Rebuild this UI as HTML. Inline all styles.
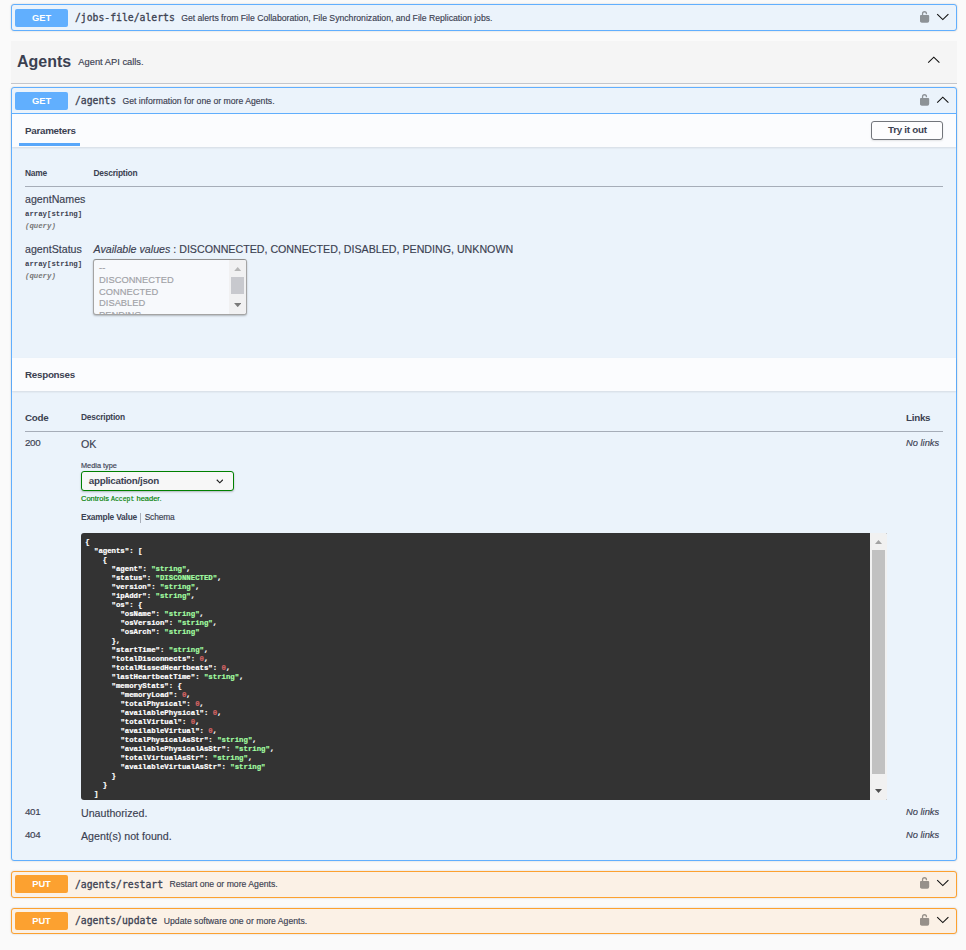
<!DOCTYPE html>
<html lang="en">
<head>
<meta charset="utf-8">
<title>Swagger UI - Agents</title>
<style>
html,body{margin:0;padding:0}
body{width:966px;height:950px;position:relative;overflow:hidden;background:#fafafa;color:#3b4151;
 font-family:"Liberation Sans", Arial, sans-serif}
section{display:contents}
section>div,section>span,section>svg{position:absolute;box-sizing:border-box}
.t{line-height:1;white-space:pre;color:#3b4151}
.t>.z{display:inline-block;width:0;height:14px}
.t:not(.b){-webkit-text-stroke:0.15px currentColor}
.m{font-family:"Liberation Mono", "DejaVu Sans Mono", monospace}
.b{font-weight:bold}
.i{font-style:italic}
.w{color:#fff}
.c{transform:translateX(-50%)}
.op{border:1px solid #61affe;border-radius:3px;background:#ebf3fb;box-shadow:0 0 2px rgba(0,0,0,.19)}
.op.put{border-color:#fca130;background:#fbf1e6}
.badge{border-radius:2px;background:#61affe}
.badge.put{background:#fca130}
.sec{background:#fbfcfe;box-shadow:0 1px 2px rgba(0,0,0,.1)}
.hr{background:#a6adb8}
.t.path{font-family:"DejaVu Sans Mono","Liberation Mono",monospace;-webkit-text-stroke:0.3px #3b4151}
.gray{color:#777}
.o{position:absolute;left:5.1px;font-size:9.33px;color:#a0a1a6}
.green{color:#008000}
pre{margin:0}
</style>
</head>
<body>

<section class="opblock opblock-get" aria-label="GET /jobs-file/alerts">
<div class="op get" style="left:11px;top:4px;width:946px;height:27px;"></div>
<div class="badge get" style="left:15px;top:9px;width:53px;height:18px;"></div>
<span class="t b w c" style="left:41.5px;top:7px;font-size:9.33px;"><i class="z"></i>GET</span>
<span class="t m path" style="left:75px;top:7px;font-size:9.75px;"><i class="z"></i>/jobs-file/alerts</span>
<span class="t" style="left:181.2px;top:7px;font-size:8.67px;"><i class="z"></i>Get alerts from File Collaboration, File Synchronization, and File Replication jobs.</span>
<svg class="ic" style="left:920px;top:11px" width="10" height="12" viewBox="0 0 20 24"><path d="M5.1 8.2V5.4C5.1 3 6.8 1.5 9 1.5C11.2 1.5 12.9 3 12.9 5.4V6.4" fill="none" stroke="#000" stroke-opacity=".4" stroke-width="2.6"/><path d="M1.8 8.2H16.4a2 2 0 0 1 2 2V19.7a3.8 3.8 0 0 1 -3.8 3.8H3.6a3.8 3.8 0 0 1 -3.8 -3.8V10.2a2 2 0 0 1 2 -2z" fill="#000" fill-opacity=".4"/></svg>
<svg class="ic" style="left:936px;top:13.2px" width="14" height="8" viewBox="0 0 14 8"><path d="M1.2 1.1 L6.8 6.6 L12.4 1.1" fill="none" stroke="#111" stroke-width="1.1"/></svg>
</section>
<section class="opblock-tag" aria-label="Agents">
<div style="left:11px;top:41px;width:946px;height:43px;background:#f5f5f5;border-bottom:1px solid #c4c6cb"></div>
<span class="t b" style="left:17px;top:53px;font-size:16px;"><i class="z"></i>Agents</span>
<span class="t" style="left:78.3px;top:51px;font-size:9.33px;"><i class="z"></i>Agent API calls.</span>
<svg class="ic" style="left:927px;top:56px" width="14" height="8" viewBox="0 0 14 8"><path d="M1.2 6.6 L6.8 1.2 L12.4 6.6" fill="none" stroke="#111" stroke-width="1.1"/></svg>
</section>
<section class="opblock opblock-get is-open" aria-label="GET /agents">
<div class="op get" style="left:11px;top:87px;width:946px;height:774px;"></div>
<div style="left:12px;top:113px;width:944px;height:1px;background:#61affe"></div>
<div class="badge get" style="left:15px;top:92px;width:53px;height:18px;"></div>
<span class="t b w c" style="left:41.5px;top:90px;font-size:9.33px;"><i class="z"></i>GET</span>
<span class="t m path" style="left:75px;top:90px;font-size:9.75px;"><i class="z"></i>/agents</span>
<span class="t" style="left:122.5px;top:90px;font-size:8.67px;"><i class="z"></i>Get information for one or more Agents.</span>
<svg class="ic" style="left:920px;top:94px" width="10" height="12" viewBox="0 0 20 24"><path d="M5.1 8.2V5.4C5.1 3 6.8 1.5 9 1.5C11.2 1.5 12.9 3 12.9 5.4V6.4" fill="none" stroke="#000" stroke-opacity=".4" stroke-width="2.6"/><path d="M1.8 8.2H16.4a2 2 0 0 1 2 2V19.7a3.8 3.8 0 0 1 -3.8 3.8H3.6a3.8 3.8 0 0 1 -3.8 -3.8V10.2a2 2 0 0 1 2 -2z" fill="#000" fill-opacity=".4"/></svg>
<svg class="ic" style="left:936px;top:96px" width="14" height="8" viewBox="0 0 14 8"><path d="M1.2 6.6 L6.8 1.2 L12.4 6.6" fill="none" stroke="#111" stroke-width="1.1"/></svg>
<section class="parameters" aria-label="Parameters">
<div class="sec" style="left:12px;top:114px;width:944px;height:33px;"></div>
<span class="t b" style="left:25px;top:120px;font-size:9.8px;letter-spacing:-0.27px"><i class="z"></i>Parameters</span>
<div style="left:19.3px;top:143px;width:60.9px;height:3px;background:#58a7fa"></div>
<div style="left:871px;top:121px;width:72px;height:19px;border:1.33px solid #72757b;border-radius:3px;background:#fdfdfe;box-shadow:0 1px 2px rgba(0,0,0,.1)"></div>
<span class="t b c" style="left:907.3px;top:119px;font-size:9.8px;letter-spacing:-0.27px"><i class="z"></i>Try it out</span>
<span class="t b" style="left:25px;top:162px;font-size:8.4px;letter-spacing:-0.2px"><i class="z"></i>Name</span>
<span class="t b" style="left:93.5px;top:162px;font-size:8.4px;letter-spacing:-0.2px"><i class="z"></i>Description</span>
<div class="hr" style="left:25px;top:186px;width:918px;height:1px;"></div>
<span class="t" style="left:25px;top:189px;font-size:10.67px;"><i class="z"></i>agentNames</span>
<span class="t m b" style="left:25px;top:202px;font-size:7.33px;"><i class="z"></i>array[string]</span>
<span class="t m b i gray" style="left:25px;top:214px;font-size:7.33px;"><i class="z"></i>(query)</span>
<span class="t" style="left:25px;top:239px;font-size:10.67px;"><i class="z"></i>agentStatus</span>
<span class="t m b" style="left:25px;top:252px;font-size:7.33px;"><i class="z"></i>array[string]</span>
<span class="t m b i gray" style="left:25px;top:264px;font-size:7.33px;"><i class="z"></i>(query)</span>
<span class="t" style="left:93.5px;top:239px;font-size:10.67px;"><i class="z"></i><em>Available values</em> : DISCONNECTED, CONNECTED, DISABLED, PENDING, UNKNOWN</span>
<div style="left:93px;top:259px;width:154px;height:56px;border:1px solid #a4a4a4;border-top-color:#8f8f8f;border-radius:3px;background:#f7f9fc;box-shadow:0 1px 2px rgba(0,0,0,.25);overflow:hidden"><span class="t o" style="top:-3px"><i class="z"></i>--</span><span class="t o" style="top:9px"><i class="z"></i>DISCONNECTED</span><span class="t o" style="top:21px"><i class="z"></i>CONNECTED</span><span class="t o" style="top:32px"><i class="z"></i>DISABLED</span><span class="t o" style="top:44px"><i class="z"></i>PENDING</span><div style="position:absolute;right:0;top:0;width:17px;height:54px;background:#f1f1f2"></div><div style="position:absolute;right:2px;top:17px;width:13px;height:16.8px;background:#c8c9ce"></div><svg style="position:absolute;right:4.9px;top:6.8px" width="7.4" height="4.2" viewBox="0 0 7 4"><path d="M0 4L3.5 0L7 4z" fill="#b6b6b6"/></svg><svg style="position:absolute;right:4.9px;top:42.8px" width="7.4" height="4.2" viewBox="0 0 7 4"><path d="M0 0L3.5 4L7 0z" fill="#7a7a7a"/></svg></div>
</section>
<section class="responses" aria-label="Responses">
<div class="sec" style="left:12px;top:358px;width:944px;height:33px;"></div>
<span class="t b" style="left:25px;top:364px;font-size:9.8px;letter-spacing:-0.27px"><i class="z"></i>Responses</span>
<span class="t b" style="left:25px;top:407px;font-size:9.8px;letter-spacing:-0.27px"><i class="z"></i>Code</span>
<span class="t b" style="left:81px;top:406px;font-size:8.4px;letter-spacing:-0.2px"><i class="z"></i>Description</span>
<span class="t b" style="left:906px;top:407px;font-size:9.8px;letter-spacing:-0.27px"><i class="z"></i>Links</span>
<div class="hr" style="left:25px;top:431px;width:918px;height:1px;"></div>
<span class="t" style="left:25px;top:432px;font-size:9.8px;letter-spacing:-0.35px"><i class="z"></i>200</span>
<span class="t" style="left:81px;top:434px;font-size:10.67px;"><i class="z"></i>OK</span>
<span class="t i" style="left:906px;top:432px;font-size:9.33px;"><i class="z"></i>No links</span>
<span class="t" style="left:81px;top:454px;font-size:7.33px;"><i class="z"></i>Media type</span>
<div style="left:81px;top:471px;width:153px;height:20px;border:1.33px solid #008000;border-radius:3px;background:#f7f7f7;box-shadow:0 1px 2px rgba(0,0,0,.25)"></div>
<span class="t b" style="left:88.8px;top:470px;font-size:9.8px;letter-spacing:-0.27px"><i class="z"></i>application/json</span>
<svg class="ic" style="left:215.6px;top:479px" width="7.6" height="4.75" viewBox="0 0 8 5"><path d="M0.8 0.8L4 4L7.2 0.8" fill="none" stroke="#222" stroke-width="1.2"/></svg>
<span class="t green" style="left:81px;top:487px;font-size:7.5px;color:#008000"><i class="z"></i>Controls <span class="m" style="font-size:6.5px">Accept</span> header.</span>
<span class="t b" style="left:81px;top:506px;font-size:8.4px;letter-spacing:-0.2px"><i class="z"></i>Example Value</span>
<div style="left:140px;top:513px;width:1px;height:9.5px;background:#a9aeb8"></div>
<span class="t" style="left:144.7px;top:506px;font-size:8.4px;letter-spacing:-0.15px"><i class="z"></i>Schema</span>
<div style="left:81px;top:533px;width:806px;height:267px;border-radius:3px 1px 1px 3px;background:#333;overflow:hidden"><pre class="m" style="position:absolute;left:4.2px;top:5.1px;font-size:7.33px;line-height:9px;font-weight:bold;color:#fff;-webkit-text-stroke:0.2px currentColor">{
  <span>"agents"</span>: [
    {
      <span>"agent"</span>: <span style="color:#a2fca2">"string"</span>,
      <span>"status"</span>: <span style="color:#a2fca2">"DISCONNECTED"</span>,
      <span>"version"</span>: <span style="color:#a2fca2">"string"</span>,
      <span>"ipAddr"</span>: <span style="color:#a2fca2">"string"</span>,
      <span>"os"</span>: {
        <span>"osName"</span>: <span style="color:#a2fca2">"string"</span>,
        <span>"osVersion"</span>: <span style="color:#a2fca2">"string"</span>,
        <span>"osArch"</span>: <span style="color:#a2fca2">"string"</span>
      },
      <span>"startTime"</span>: <span style="color:#a2fca2">"string"</span>,
      <span>"totalDisconnects"</span>: <span style="color:#d36363">0</span>,
      <span>"totalMissedHeartbeats"</span>: <span style="color:#d36363">0</span>,
      <span>"lastHeartbeatTime"</span>: <span style="color:#a2fca2">"string"</span>,
      <span>"memoryStats"</span>: {
        <span>"memoryLoad"</span>: <span style="color:#d36363">0</span>,
        <span>"totalPhysical"</span>: <span style="color:#d36363">0</span>,
        <span>"availablePhysical"</span>: <span style="color:#d36363">0</span>,
        <span>"totalVirtual"</span>: <span style="color:#d36363">0</span>,
        <span>"availableVirtual"</span>: <span style="color:#d36363">0</span>,
        <span>"totalPhysicalAsStr"</span>: <span style="color:#a2fca2">"string"</span>,
        <span>"availablePhysicalAsStr"</span>: <span style="color:#a2fca2">"string"</span>,
        <span>"totalVirtualAsStr"</span>: <span style="color:#a2fca2">"string"</span>,
        <span>"availableVirtualAsStr"</span>: <span style="color:#a2fca2">"string"</span>
      }
    }
  ]
}</pre><div style="position:absolute;right:0;top:0;width:17px;height:267px;background:#f1f1f1"></div><div style="position:absolute;right:2px;top:17px;width:13px;height:223.6px;background:#c1c1c1"></div><svg style="position:absolute;right:5px;top:7px" width="7" height="4" viewBox="0 0 7 4"><path d="M0 4L3.5 0L7 4z" fill="#a3a3a3"/></svg><svg style="position:absolute;right:5px;top:256px" width="7" height="4" viewBox="0 0 7 4"><path d="M0 0L3.5 4L7 0z" fill="#505050"/></svg></div>
<span class="t" style="left:25px;top:801px;font-size:9.8px;letter-spacing:-0.35px"><i class="z"></i>401</span>
<span class="t" style="left:81px;top:803px;font-size:10.67px;"><i class="z"></i>Unauthorized.</span>
<span class="t i" style="left:906px;top:801px;font-size:9.33px;"><i class="z"></i>No links</span>
<span class="t" style="left:25px;top:824px;font-size:9.8px;letter-spacing:-0.35px"><i class="z"></i>404</span>
<span class="t" style="left:81px;top:826px;font-size:10.67px;"><i class="z"></i>Agent(s) not found.</span>
<span class="t i" style="left:906px;top:824px;font-size:9.33px;"><i class="z"></i>No links</span>
</section>
</section>
<section class="opblock opblock-put" aria-label="PUT /agents/restart">
<div class="op put" style="left:11px;top:871px;width:946px;height:27px;"></div>
<div class="badge put" style="left:15px;top:875px;width:53px;height:18px;"></div>
<span class="t b w c" style="left:41.5px;top:873px;font-size:9.33px;"><i class="z"></i>PUT</span>
<span class="t m path" style="left:75px;top:874px;font-size:9.75px;"><i class="z"></i>/agents/restart</span>
<span class="t" style="left:169.4px;top:873px;font-size:8.67px;"><i class="z"></i>Restart one or more Agents.</span>
<svg class="ic" style="left:920px;top:877px" width="10" height="12" viewBox="0 0 20 24"><path d="M5.1 8.2V5.4C5.1 3 6.8 1.5 9 1.5C11.2 1.5 12.9 3 12.9 5.4V6.4" fill="none" stroke="#000" stroke-opacity=".4" stroke-width="2.6"/><path d="M1.8 8.2H16.4a2 2 0 0 1 2 2V19.7a3.8 3.8 0 0 1 -3.8 3.8H3.6a3.8 3.8 0 0 1 -3.8 -3.8V10.2a2 2 0 0 1 2 -2z" fill="#000" fill-opacity=".4"/></svg>
<svg class="ic" style="left:936px;top:878.7px" width="14" height="8" viewBox="0 0 14 8"><path d="M1.2 1.1 L6.8 6.6 L12.4 1.1" fill="none" stroke="#111" stroke-width="1.1"/></svg>
</section>
<section class="opblock opblock-put" aria-label="PUT /agents/update">
<div class="op put" style="left:11px;top:908px;width:946px;height:26px;"></div>
<div class="badge put" style="left:15px;top:912px;width:53px;height:18px;"></div>
<span class="t b w c" style="left:41.5px;top:910px;font-size:9.33px;"><i class="z"></i>PUT</span>
<span class="t m path" style="left:75px;top:910px;font-size:9.75px;"><i class="z"></i>/agents/update</span>
<span class="t" style="left:163.8px;top:910px;font-size:8.67px;"><i class="z"></i>Update software one or more Agents.</span>
<svg class="ic" style="left:920px;top:914px" width="10" height="12" viewBox="0 0 20 24"><path d="M5.1 8.2V5.4C5.1 3 6.8 1.5 9 1.5C11.2 1.5 12.9 3 12.9 5.4V6.4" fill="none" stroke="#000" stroke-opacity=".4" stroke-width="2.6"/><path d="M1.8 8.2H16.4a2 2 0 0 1 2 2V19.7a3.8 3.8 0 0 1 -3.8 3.8H3.6a3.8 3.8 0 0 1 -3.8 -3.8V10.2a2 2 0 0 1 2 -2z" fill="#000" fill-opacity=".4"/></svg>
<svg class="ic" style="left:936px;top:915.6px" width="14" height="8" viewBox="0 0 14 8"><path d="M1.2 1.1 L6.8 6.6 L12.4 1.1" fill="none" stroke="#111" stroke-width="1.1"/></svg>
</section>
</body>
</html>
